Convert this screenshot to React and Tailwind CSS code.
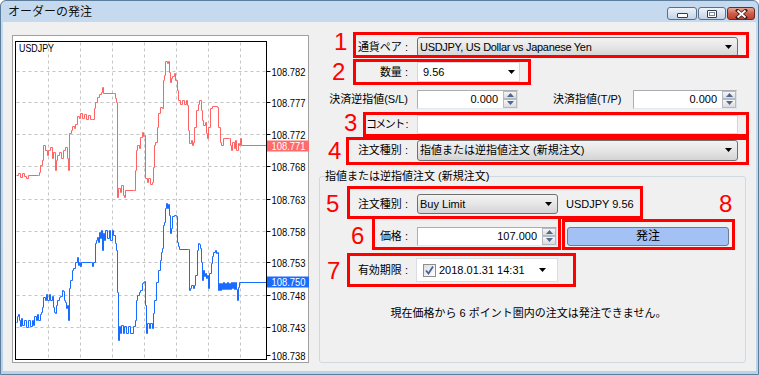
import React from 'react'

const RED = [
  [16,175],[18,173],[20,177],[22,173],[24,176],[26,178],[28,175],[38,175],[39,172],[40,165],[42,160],[43,145],[45,150],[47,155],[48,150],[50,147],[52,158],[53,152],[55,170],[56,160],[57,155],[59,152],[61,158],[63,150],[65,147],[67,158],[68,170],[69,133],[71,130],[72,126],[74,128],[75,124],[77,116],[79,118],[80,113],[82,118],[84,114],[86,119],[88,115],[90,119],[92,119],[94,108],[95,102],[97,97],[99,94],[101,92],[102,87],[103,93],[113,93],[115,98],[116,102],[117,197],[118,188],[120,192],[121,185],[123,195],[124,197],[125,190],[133,190],[135,170],[136,150],[137,145],[139,148],[140,137],[142,132],[143,136],[144,135],[145,178],[147,182],[148,178],[150,184],[152,182],[153,167],[154,145],[155,142],[157,127],[158,113],[160,107],[162,108],[163,80],[164,75],[165,61],[167,63],[168,61],[169,72],[170,82],[171,78],[172,76],[174,73],[175,80],[177,90],[178,100],[180,104],[182,100],[184,104],[186,100],[187,105],[188,130],[189,143],[191,140],[192,145],[193,142],[194,127],[196,110],[198,104],[199,100],[201,110],[202,120],[203,125],[205,122],[206,133],[207,138],[208,127],[210,108],[212,106],[217,107],[218,127],[220,142],[221,145],[223,138],[229,138],[230,145],[231,150],[232,142],[234,148],[235,140],[236,150],[238,143],[239,145],[240,138],[241,145],[266,145]
]

const BLUE = [
  [16,322],[17,316],[18,314],[19,320],[20,326],[21,318],[22,325],[24,320],[26,327],[28,320],[30,326],[32,320],[33,325],[34,316],[36,320],[37,314],[38,320],[40,314],[41,312],[42,307],[43,297],[45,300],[46,294],[47,300],[49,294],[50,300],[52,296],[53,307],[54,312],[55,313],[56,305],[57,300],[59,297],[60,296],[62,290],[63,291],[64,300],[65,302],[66,308],[67,305],[68,320],[69,288],[70,280],[72,270],[73,268],[75,262],[77,257],[78,265],[79,262],[80,266],[81,262],[91,262],[92,266],[93,262],[95,243],[96,240],[97,237],[98,242],[99,232],[100,238],[101,230],[102,250],[103,233],[104,240],[105,230],[107,238],[109,230],[110,240],[112,230],[113,235],[115,243],[116,250],[117,292],[118,340],[119,326],[120,333],[121,325],[123,333],[124,326],[126,333],[128,326],[130,333],[133,326],[135,320],[136,300],[137,295],[139,292],[140,290],[142,283],[143,282],[144,281],[145,305],[146,333],[147,323],[149,328],[150,323],[152,328],[153,313],[154,300],[156,282],[158,270],[160,260],[161,252],[162,248],[163,225],[164,222],[165,208],[166,203],[167,208],[168,204],[169,215],[170,233],[171,228],[172,216],[174,215],[176,216],[177,242],[178,246],[179,249],[188,249],[189,290],[190,288],[191,285],[193,288],[194,285],[195,275],[197,250],[198,243],[199,244],[200,248],[201,262],[202,280],[203,270],[204,276],[205,273],[206,278],[207,275],[208,288],[209,273],[211,263],[212,256],[213,252],[215,250],[216,253],[217,252],[218,290],[219,283],[220,290],[221,283],[222,289],[223,282],[224,289],[225,283],[226,289],[227,282],[228,289],[229,283],[230,289],[231,282],[232,288],[233,282],[234,289],[235,282],[236,289],[237,300],[238,287],[239,282],[266,282]
]

const gridY = [71, 102, 134, 166, 199, 231, 262, 295, 327]
const gridX = [48, 80, 112, 144, 176, 208, 240]
const axisLabels = [
  [71, '108.782'], [102, '108.777'], [134, '108.772'], [166, '108.768'], [199, '108.763'],
  [231, '108.758'], [262, '108.753'], [295, '108.748'], [327, '108.743'], [355, '108.738'],
]

const stepPath = (pts) =>
  pts.map(([x, y], i) => (i === 0 ? `M${x} ${y}` : `H${x}V${y}`)).join('')

const Chart = () => (
  <div className="w-[297px] h-[328px] border border-[#a0a0a0] bg-white">
    <svg width="295" height="326" className="block overflow-visible">
      <g transform="translate(-12.5 -35.5)" fontFamily="Liberation Sans, Arial, sans-serif">
        {gridY.map((y) => (
          <line key={'h' + y} x1="16" x2="266" y1={y} y2={y} stroke="#c4c4c4" strokeDasharray="3 3" />
        ))}
        {gridX.map((x) => (
          <line key={'v' + x} x1={x} x2={x} y1="42" y2="359" stroke="#c4c4c4" strokeDasharray="3 3" />
        ))}
        <path d={stepPath(RED)} fill="none" stroke="#ff6464" strokeWidth="1" />
        <path d={stepPath(BLUE)} fill="none" stroke="#1a6cff" strokeWidth="1" />
        <rect x="15" y="41" width="251" height="318" fill="none" stroke="#000" />
        {gridY.concat([355]).map((y) => (
          <line key={'t' + y} x1="266" x2="270" y1={y} y2={y} stroke="#000" />
        ))}
        {axisLabels.map(([y, t]) => (
          <text key={t} x="271" y={y + 4} fontSize="10" textLength="34" lengthAdjust="spacingAndGlyphs" fill="#000">{t}</text>
        ))}
        <rect x="266.5" y="140" width="42" height="11" fill="#ff6a6a" />
        <text x="271" y="149.5" fontSize="10" textLength="34" lengthAdjust="spacingAndGlyphs" fill="#fff">108.771</text>
        <rect x="266.5" y="276" width="42" height="11" fill="#1a6cff" />
        <text x="271" y="285.5" fontSize="10" textLength="34" lengthAdjust="spacingAndGlyphs" fill="#fff">108.750</text>
        <text x="18.5" y="51.5" fontSize="11" textLength="35" lengthAdjust="spacingAndGlyphs" fill="#000">USDJPY</text>
      </g>
    </svg>
  </div>
)

const Caret = () => (
  <svg width="7" height="4" className="block shrink-0">
    <path d="M0 0h7L3.5 4z" fill="#000" />
  </svg>
)

const Select = ({ className, text }) => (
  <div className={`flex items-center rounded-[3px] border border-[#707070] bg-linear-to-b from-[#f3f3f3] via-[#e6e6e6] to-[#d4d4d4] pl-[2px] pr-[5px] ${className}`}>
    <span className="flex-1 truncate">{text}</span>
    <Caret />
  </div>
)

const SpinBtn = ({ up }) => (
  <div className="flex-1 flex items-center justify-center border border-[#b4b9c2] bg-linear-to-b from-[#f6f6f6] to-[#dcdcdc]">
    <svg width="7" height="4" className="block">
      <path d={up ? 'M0 4h7L3.5 0z' : 'M0 0h7L3.5 4z'} fill="#4f6794" />
    </svg>
  </div>
)

const Spin = ({ className, value }) => (
  <div className={`flex h-[19px] bg-white border border-[#abadb3] border-r-[#dbdfe6] border-b-[#e3e9ef] ${className}`}>
    <span className="flex-1 text-right pr-[5px] leading-[17px]">{value}</span>
    <div className="flex flex-col w-[14px]">
      <SpinBtn up />
      <SpinBtn />
    </div>
  </div>
)

const TitleBtn = ({ className, children }) => (
  <div className={`flex items-center justify-center h-[13px] rounded-[3px] border border-[#5b6f8a] ${className}`}>
    {children}
  </div>
)

const Box = ({ className }) => (
  <div className={`absolute border-[3px] border-[#ff0000] ${className}`} />
)

const Num = ({ className, n }) => (
  <div className={`absolute text-[24px] leading-none text-[#ff0000] ${className}`}>{n}</div>
)

const App = () => {
  return (
    <div className="relative w-[759px] h-[375px] overflow-hidden font-['Liberation_Sans','Noto_Sans_CJK_JP',sans-serif] text-[11px] text-black">
      <div className="flex flex-col w-full h-full border border-[#5d7d9c] rounded-t-[6px] bg-linear-to-b from-[#c6daef] to-[#bad2ea] px-[2px] pb-[3px]">
        <div className="flex items-start h-[21px] shrink-0">
          <span className="pl-[5px] pt-[3px] text-[12px] leading-[16px] text-[#111]">オーダーの発注</span>
          <div className="ml-auto flex gap-[1px] pt-[6px] pr-[1px]">
            <TitleBtn className="w-[30px] bg-linear-to-b from-[#eef3fa] to-[#c3d3e7]">
              <div className="w-[11px] h-[5px] mt-[4px] bg-white border border-[#333c4a] rounded-[1px]" />
            </TitleBtn>
            <TitleBtn className="w-[28px] bg-linear-to-b from-[#eef3fa] to-[#c3d3e7]">
              <div className="w-[10px] h-[8px] bg-white border border-[#333c4a] rounded-[1px] p-[1px]">
                <div className="w-full h-full border border-[#7a8799]" />
              </div>
            </TitleBtn>
            <TitleBtn className="w-[28px] border-[#6b2a22] bg-linear-to-b from-[#e3a393] via-[#cf5d48] to-[#c0412c]">
              <svg width="13" height="10" className="block">
                <path d="M2.5 1.5l8 7M10.5 1.5l-8 7" stroke="#3a1a16" strokeWidth="3.4" strokeLinecap="square" />
                <path d="M2.5 1.5l8 7M10.5 1.5l-8 7" stroke="#fff" strokeWidth="1.8" />
              </svg>
            </TitleBtn>
          </div>
        </div>

        <div className="flex flex-1 bg-[#f0f0f0]">
          <div className="pl-[9px] pt-[13px]">
            <Chart />
          </div>

          <div className="flex flex-col pt-[14px] w-[446px]">
            <div className="flex items-center h-[22px]">
              <span className="w-[99px] text-right">通貨ペア :</span>
              <Select className="ml-[9px] w-[321px] h-[20px] tracking-[-0.3px]" text="USDJPY, US Dollar vs Japanese Yen" />
            </div>

            <div className="flex items-center h-[22px] mt-[3px]">
              <span className="w-[99px] text-right">数量 :</span>
              <div className="ml-[9px] flex items-center w-[103px] h-[20px] bg-white border border-[#d3d7dd] pl-[5px] pr-[4px]">
                <span className="flex-1">9.56</span>
                <Caret />
              </div>
            </div>

            <div className="flex items-center h-[22px] mt-[5px]">
              <span className="w-[99px] text-right">決済逆指値(S/L)</span>
              <Spin className="ml-[9px] w-[101px]" value="0.000" />
              <span className="ml-[35px] w-[80px]">決済指値(T/P)</span>
              <Spin className="w-[104px]" value="0.000" />
            </div>

            <div className="flex items-center h-[22px] mt-[3px]">
              <span className="w-[99px] text-right tracking-[-1.5px] pr-[1px]">コメント :</span>
              <div className="ml-[9px] w-[321px] h-[19px] bg-white border border-[#d3d7dd]" />
            </div>

            <div className="flex items-center h-[22px] mt-[4px]">
              <span className="w-[99px] text-right">注文種別 :</span>
              <Select className="ml-[9px] w-[321px] h-[21px]" text="指値または逆指値注文 (新規注文)" />
            </div>

            <fieldset className="ml-[10px] mt-[7px] w-[427px] h-[195px] border border-[#d0d8e0] rounded-[3px]">
              <legend className="ml-[5px] leading-[16px]">指値または逆指値注文 (新規注文)</legend>

              <div className="flex items-center h-[22px] mt-[9px]">
                <span className="w-[88px] text-right">注文種別 :</span>
                <Select className="ml-[9px] w-[141px] h-[20px]" text="Buy Limit" />
                <span className="ml-[8px]">USDJPY 9.56</span>
              </div>

              <div className="flex items-center h-[22px] mt-[10px]">
                <span className="w-[88px] text-right">価格 :</span>
                <Spin className="ml-[9px] w-[140px]" value="107.000" />
                <button className="ml-[10px] w-[162px] h-[19px] rounded-[3px] border border-[#6a7b92] bg-[#a4c1f6] text-[12px] leading-[16px]">発注</button>
              </div>

              <div className="flex items-center h-[24px] mt-[11px]">
                <span className="w-[88px] text-right">有効期限 :</span>
                <div className="ml-[8px] flex items-center w-[142px] h-[24px] bg-white border border-[#dadde2] pl-[6px] pr-[11px]">
                  <div className="w-[13px] h-[13px] border border-[#8e8f8f] bg-linear-to-br from-[#dedede] to-white">
                    <svg width="11" height="11" className="block">
                      <path d="M2 5.5l2.5 3L9 1.5" fill="none" stroke="#4a5f9c" strokeWidth="1.8" />
                    </svg>
                  </div>
                  <span className="ml-[3px]">2018.01.31 14:31</span>
                  <div className="ml-auto">
                    <Caret />
                  </div>
                </div>
              </div>

              <div className="mt-[23px] h-[16px] leading-[16px] text-center pr-[8px]">
                現在価格から 6 ポイント圏内の注文は発注できません。
              </div>
            </fieldset>
          </div>
        </div>
      </div>

      <div className="absolute inset-0 pointer-events-none font-['Liberation_Sans',sans-serif]">
        <Box className="left-[353px] top-[32px] w-[396px] h-[26px]" />
        <Box className="left-[353px] top-[59px] w-[178px] h-[26px]" />
        <Box className="left-[363px] top-[112px] w-[386px] h-[25px]" />
        <Box className="left-[346px] top-[137px] w-[403px] h-[28px]" />
        <Box className="left-[347px] top-[186px] w-[296px] h-[33px]" />
        <Box className="left-[372px] top-[216px] w-[189px] h-[34px]" />
        <Box className="left-[562px] top-[219px] w-[173px] h-[31px]" />
        <Box className="left-[347px] top-[253px] w-[229px] h-[34px]" />
        <Num className="left-[334px] top-[30px]" n="1" />
        <Num className="left-[332px] top-[60px]" n="2" />
        <Num className="left-[344px] top-[111px]" n="3" />
        <Num className="left-[328px] top-[139px]" n="4" />
        <Num className="left-[326px] top-[192px]" n="5" />
        <Num className="left-[351px] top-[224px]" n="6" />
        <Num className="left-[327px] top-[259px]" n="7" />
        <Num className="left-[719px] top-[192px]" n="8" />
      </div>
    </div>
  )
}

export default App
